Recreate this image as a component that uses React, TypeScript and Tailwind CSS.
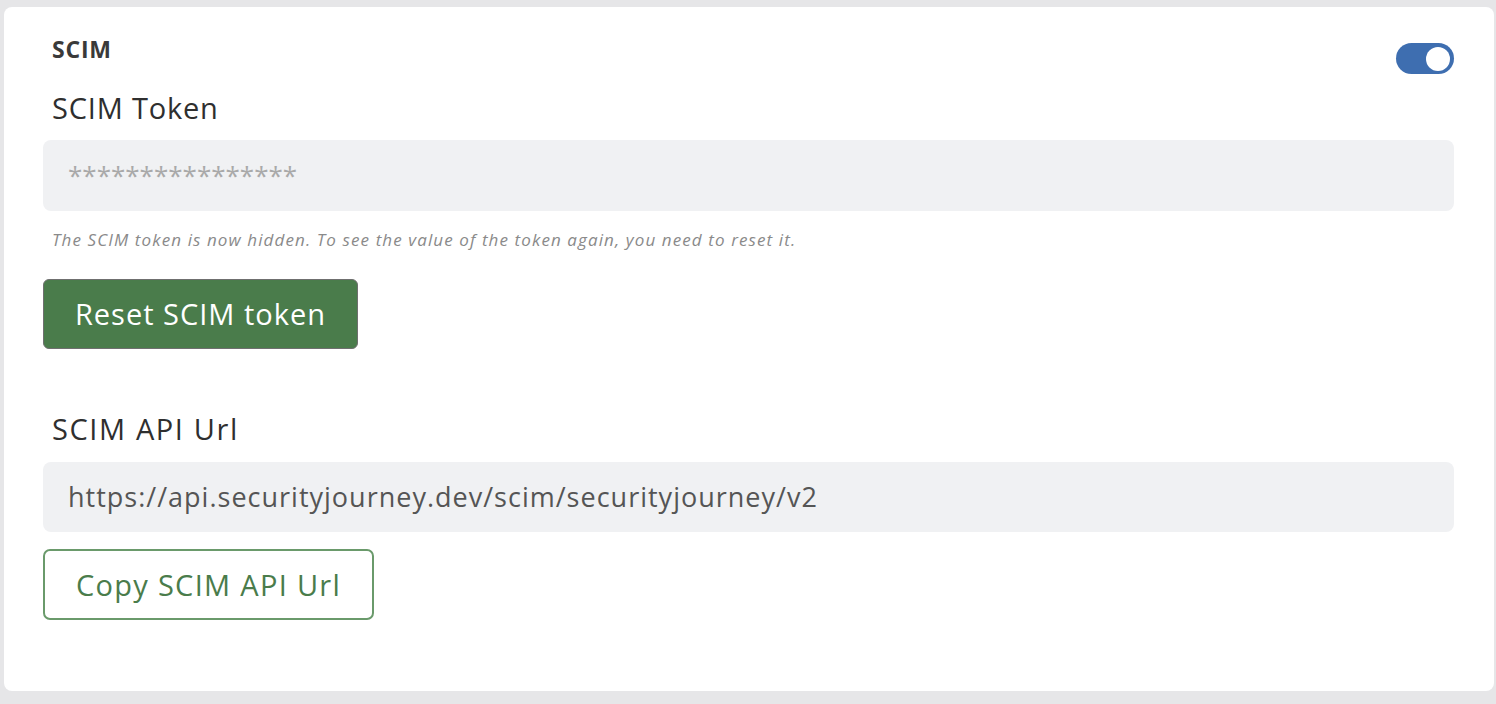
import React, { useState } from 'react';

const API_URL = 'https://api.securityjourney.dev/scim/securityjourney/v2';

const Toggle: React.FC<{ on: boolean; onChange: (v: boolean) => void }> = ({ on, onChange }) => (
  <button
    onClick={() => onChange(!on)}
    className={`mt-[6px] w-[58px] h-[31px] rounded-full flex items-center px-[4px] ${on ? 'bg-[#3e6eb0] justify-end' : 'bg-[#c9ccd1] justify-start'}`}
  >
    <span className="w-[24px] h-[24px] rounded-full bg-white" />
  </button>
);

export default function App() {
  const [enabled, setEnabled] = useState(true);

  return (
    <div className="min-h-[704px] bg-[#e6e6e8] pt-[7px] pl-[4px] pr-[2px] pb-[13px] font-['Open_Sans','Noto_Sans',sans-serif] text-[#2f2f2f]">
      <div className="bg-white rounded-[8px] h-[684px] pt-[30px] pl-[39px] pr-[40px]">
        <div className="flex justify-between items-start">
          <h2 className="pl-[9px] text-[23px] leading-[24px] font-bold tracking-[0.8px] text-[#3a3a3a]">SCIM</h2>
          <Toggle on={enabled} onChange={setEnabled} />
        </div>

        <label className="block mt-[16px] pl-[9px] text-[29px] leading-[36px] tracking-[0.8px]">SCIM Token</label>
        <div className="mt-[14px] h-[71px] rounded-[8px] bg-[#f0f1f3] flex items-center px-[25px] text-[26px] text-[#a9a9a9]">
          ****************
        </div>
        <p className="mt-[19px] pl-[9px] text-[17px] leading-[20px] italic tracking-[1.1px] text-[#8a8a8a]">
          The SCIM token is now hidden. To see the value of the token again, you need to reset it.
        </p>

        <button className="mt-[29px] h-[70px] w-[315px] rounded-[6px] bg-[#4a7c4b] border border-[#6f6f6f] text-white text-[29px] tracking-[1px]">
          Reset SCIM token
        </button>

        <label className="block mt-[62px] pl-[9px] text-[29px] leading-[36px] tracking-[1.6px]">SCIM API Url</label>
        <div className="mt-[15px] h-[70px] rounded-[8px] bg-[#f0f1f3] flex items-center px-[25px] text-[27px] tracking-[1px] text-[#555555]">
          {API_URL}
        </div>

        <button
          onClick={() => navigator.clipboard?.writeText(API_URL)}
          className="mt-[17px] h-[71px] w-[331px] rounded-[7px] bg-white border-2 border-[#6a9a6b] text-[#4a7c4b] text-[29px] tracking-[1.3px]"
        >
          Copy SCIM API Url
        </button>
      </div>
    </div>
  );
}
